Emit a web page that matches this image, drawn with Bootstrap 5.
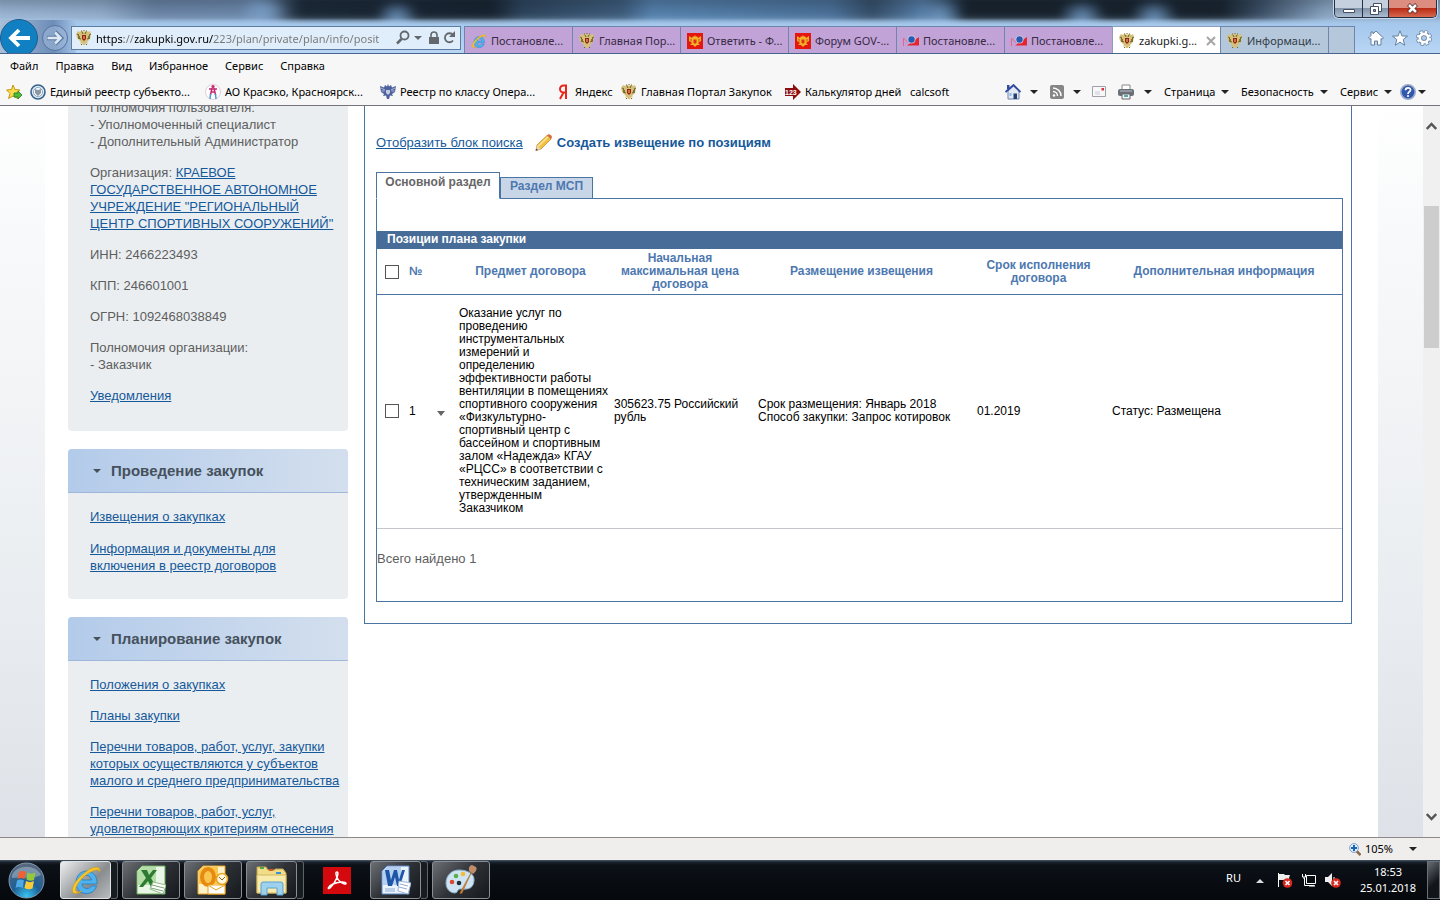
<!DOCTYPE html>
<html lang="ru">
<head>
<meta charset="utf-8">
<meta name="viewport" content="width=device-width, initial-scale=1">
<title>Позиции плана закупки</title>
<link href="https://cdn.jsdelivr.net/npm/bootstrap@5.3.0/dist/css/bootstrap.min.css" rel="stylesheet">
<style>
:root{--ui:"Noto Sans","Open Sans",sans-serif;--page:"Liberation Sans",Arial,sans-serif;--line:#4a74a4;--link:#15599b}
body{font-family:var(--ui);font-size:11px;line-height:16px;color:#000;background:#fff}
button{font:inherit;color:inherit;background:none;border:0;padding:0}
svg{display:block;flex:none}
.ic{width:16px;height:16px}
/* window frame */
.frame{position:relative;height:54px;border-bottom:1px solid #45658c;background:#b4d2f0;overflow:hidden}
.glass{position:absolute;inset:-8px -8px 31px;filter:blur(4px);background:
 radial-gradient(ellipse 22px 15px at 405px 24px,#6c94bf,#6c94bf00),
 radial-gradient(ellipse 26px 16px at 272px 20px,#7ba0ca,#7ba0ca00),
 radial-gradient(ellipse 24px 18px at 948px 24px,#6c94bf,#6c94bf00),
 radial-gradient(ellipse 24px 16px at 1090px 24px,#6c94bf,#6c94bf00),
 radial-gradient(ellipse 24px 16px at 1162px 24px,#6c94bf,#6c94bf00),
 linear-gradient(#0f1a2666,#0f1a2600 22px),
 linear-gradient(90deg,#9cb6d4 0,#92accb 110px,#6d87a8 160px,#6b88ab 265px,#1b2836 310px,#17222f 500px,#2d445c 530px,#3e5c7c 630px,#5682ae 660px,#4b7199 840px,#354e68 880px,#577fa9 930px,#17222d 975px,#17222d 1230px,#3d5168 1270px,#8ba6c4 1335px,#8ba8c8 100%)}
.glass2{position:absolute;inset:18px 0 0;background:linear-gradient(#94b8de00,#a5c8ec 7px,#b9d6f5)}
.glass3{position:absolute;left:0;top:20px;width:76px;height:34px;background:linear-gradient(90deg,#a9bfd8,#6d8db8 70%,#a5c4e8)}
.winbtns{position:absolute;top:0;right:3px;height:18px;border:1px solid #24303f;border-top:0;border-radius:0 0 5px 5px;box-shadow:0 0 0 1px #c7d8ea;overflow:hidden}
.winbtns button{width:28px;display:flex;align-items:center;justify-content:center;background:linear-gradient(#c4d0de 45%,#8294aa 50%,#aabdd2);border-right:1px solid #24303f}
.winbtns button+button{width:26px}
.winbtns button.closer{width:47px;border:0;background:linear-gradient(#dc8d80 45%,#b92c17 50%,#d8674e)}
.navrow{position:relative;padding-top:26px;height:53px}
.backbtn,.fwdbtn{width:38px;height:38px;margin-top:-7px}
.fwdbtn{width:28px;height:28px;margin:-2px 2px 0 3px}
.addr{width:390px;height:24px;background:#e0edfa;border:1px solid #5c7ca0;padding:0 4px}
.addr input{border:0;outline:0;flex:1;min-width:0;margin:0 4px 0 4px;padding:0;height:20px;color:transparent;background:linear-gradient(90deg,#000 28px,#777 28px,#777 39px,#000 39px,#000 117px,#777 117px);-webkit-background-clip:text;background-clip:text}
.tabbar{margin-left:3px;height:27px}
.btab{width:108px;height:27px;background:#c2a3d7;border:1px solid #6f86ac;border-width:1px 0 0 1px;padding:2px 0 0 6px;gap:4px;color:#372a45;text-align:left}
.btab.on{background:#fff;color:#222;border-color:#8ba0b8}
.btab.idle{background:#b5c7da;color:#333d48}
.btab.blank{width:27px;border-right-width:1px}
.wtools{margin-left:auto;padding-right:8px;gap:8px;height:24px}
/* command rows */
.rows{background:#f7f7f7;border-bottom:1px solid #77737a}
.menurow{height:24px;padding-left:10px;gap:17px}
.favrow{height:27px;padding-left:6px}
.favrow a{color:#000;text-decoration:none;gap:4px;white-space:nowrap}
.f1{width:24px}.f2{width:175px}.f3{width:177px}.f4{width:64px}.f5{width:164px}.f6{width:125px}
.tool{display:flex;align-items:center;white-space:nowrap;gap:6px}
.tool::after,.car::after{content:"";border:4px solid transparent;border-top-color:#222;border-bottom:0}
.tool.flat::after{display:none}
.t1{width:45px;gap:9px}.t2{width:42px;gap:9px}.t3{width:26px}.t4{width:46px;gap:10px}.t5{width:77px}.t6{width:99px}.t7{width:60px}.t8{width:40px;gap:2px}
/* page */
.view{flex:1;min-height:0;overflow:hidden;font-family:var(--page);font-size:13px;line-height:17px;color:#5e5e5e}
.side-bg{flex:1;min-width:0;padding:0 45px;background:linear-gradient(#fff 0,#f9fafb 15%,#eceff2 60%,#dee2e8 100%)}
.sheet{background:#fff;height:100%;padding:0 26px 0 23px;gap:16px;overflow:hidden}
.sheet a{color:var(--link)}
.leftcol{width:280px;flex:none}
.panel{background:#eaeef1;border-radius:4px;margin-bottom:18px;padding-bottom:25px;overflow:hidden}
.panel.user{margin-top:-20px;padding:13px 14px 27px 22px}
.panel p{margin:0 0 14px}
.panel p:last-child{margin-bottom:0}
.panel h2{font-size:15px;line-height:43px;height:44px;font-weight:bold;color:#46515c;margin:0;padding-left:25px;gap:10px;background:linear-gradient(90deg,#b3cbea,#d3dfee);border-bottom:1px solid #9fb7da}
.panel h2 svg{width:8px;height:4px}
.panel ul{list-style:none;margin:0;padding:15px 4px 0 22px;display:flex;flex-direction:column;gap:15px}
.panel ul.long{gap:14px}
.maincol{flex:1;min-width:0;align-self:flex-start;border:1px solid var(--line);border-top:0;padding:28px 8px 21px 11px}
.actions{gap:12px}
.maincol .create{font-weight:bold;text-decoration:none;gap:4px}
.ptabs{margin-top:21px;margin-bottom:-1px;position:relative}
.ptab{font-size:12px;line-height:17px;font-weight:bold;border:1px solid var(--line)}
.ptab.on{width:124px;height:27px;background:#fff;border-bottom-color:#fff;padding-bottom:7px;color:#666}
.ptab.off{width:93px;height:22px;background:#c9d6e7;color:#4d78b0;padding-bottom:3px}
.pbox{border:1px solid var(--line);padding:32px 0 33px}
.ptitle{background:#486c98;color:#fff;font-size:12px;line-height:16px;height:18px;font-weight:bold;margin:0;padding-left:10px}
.ptable{width:100%;table-layout:fixed;font-size:12px;line-height:13px;color:#000}
.ptable th{color:#4d78b0;text-align:center;padding:3px 4px;border-bottom:1px solid var(--line);vertical-align:middle}
.ptable td{padding:12px 4px 13px 6px;border-bottom:1px solid #c3c7cc;vertical-align:middle}
.ptable th:nth-child(-n+2),.ptable td:nth-child(-n+2){text-align:left;padding-left:6px;padding-right:0}
.ptable th:first-child,.ptable td:first-child{padding-left:8px}
.ptable td:nth-child(3){padding-right:0}
.ptable input{appearance:none;width:14px;height:14px;border:1px solid #555;background:#fff;display:block;margin:0}
.ptable input:checked{background:#486c98}
.ptable .opener{padding-top:4px}
.found{margin:21px 0 1px}
.scroller{width:17px;background:#f0f0f0;flex:none}
.scroller i{display:block;width:15px;height:142px;background:#cdcdcd;margin:60px 0 auto 1px}
.scroller button{height:40px;display:flex;align-items:center;justify-content:center}
/* status and task bars */
.status{height:23px;background:#f0eded;border-top:1px solid #8c8a88;padding-right:23px}
.taskbar{height:40px;background:linear-gradient(#4c5a6c 0,#1b232d 2px,#0c1118 5px,#05080c);color:#fff;padding-left:8px}
.startbtn{margin-right:15px}
.app{height:38px;width:58px;margin:1px 4px 1px 0;border:1px solid #8a8d91;border-radius:3px;background:linear-gradient(135deg,#6c7075,#2e3236 50%,#15191d);display:flex;align-items:center;justify-content:center}
.app.narrow{width:51px;margin-right:0}
.app.live{background:linear-gradient(135deg,#eceeef,#8a8d90 60%,#b9bcbf);border-color:#dfe1e3}
.stack{width:7px;height:38px;border:1px solid #5f6469;border-left:0;border-radius:0 3px 3px 0;background:#171c21;margin-right:4px}
.app.bare{border:0;background:none;width:54px;margin:0 6px 0 2px}
.tray{gap:8px}
.clock{width:78px;line-height:16px;text-align:center}
.tray .desk{width:13px;height:38px;border:1px solid #6b7178;background:linear-gradient(135deg,#666c73,#12161b 60%);margin-left:-8px}
</style>
</head>
<body class="vh-100 d-flex flex-column overflow-hidden">
<svg width="0" height="0" class="position-absolute" aria-hidden="true">
 <symbol id="eagle" viewBox="0 0 16 16"><path d="M2 1l2 1 1-1h2l1 1 1-1h2l1 1 2-1 1 3-1 5-2 2-1 1 1 2-2-1-1 2H7l-1-2-2 1 1-2-2-2-2-2L0 4z" fill="#d3c07a"/><path d="M1 4l2 1-1 1 2 1-2 1 3 1M15 4l-2 1 1 1-2 1 2 1-3 1M6 14l-1 1M10 14l1 1M6 2l1 2M10 2L9 4" stroke="#6e6224" fill="none"/><path d="M6 5h4v4l-2 2-2-2z" fill="#9c1f16"/><path d="M8 6v3" stroke="#eecf7a"/><path d="M5 1h1M10 1h1M8 0v1" stroke="#7d6519"/></symbol>
 <symbol id="arms" viewBox="0 0 16 16"><path fill="#e3170e" d="M0 0h16v16H0z"/><path d="M2 3l3 2 1-2 1 1 1-2 1 2 1-1 1 2 3-2v5l-3 2 2 2-3 0-2 2-2-2-3 0 2-2-3-2z" fill="#f6b02c"/><path d="M6.500 6.500h3v3L8 11 6.500 9.500z" fill="#d9380f"/><path d="M3 6l2 1M13 6l-2 1M3 8l2 0M13 8h-2" stroke="#b9540b" stroke-width=".7"/></symbol>
 <symbol id="mail3" viewBox="0 0 16 16"><path d="M.5 13V5l5 5" stroke="#e5668a" fill="none"/><path d="M4 12.500L16 4v8.500z" fill="#e5262e"/><circle cx="8.500" cy="6.500" r="4" fill="#d8c5ea"/><circle cx="8.500" cy="6.500" r="3.200" fill="#235fae"/></symbol>
 <symbol id="ie" viewBox="0 0 32 32"><path d="M27 20H12c.5 3 2.500 4.500 5 4.500 2 0 3.500-1 4.500-2.500h5c-1.500 5-5.500 7.500-10 7.500C10 29.500 6 24.500 6 18.500 6 12 10.500 7 16.500 7 23 7 27.500 12 27 20zM12 16h9.500c-.5-3-2.500-4.500-4.800-4.500S12.600 13 12 16z" fill="#4fb2ee" stroke="#1878bd" stroke-width=".7"/><path d="M30 8c1-6-6-6-13-1C9 12.500 1 22 2.500 27.500 3.500 31 9 29 12 27c-8 3.500-8-2-3-9C15 10 28 2 30 8z" fill="#f7c82b" stroke="#cf9510" stroke-width=".6"/></symbol>
</svg>

<header>
 <div class="frame">
  <div class="glass"></div><div class="glass2"></div><div class="glass3"></div>
  <div class="navrow d-flex">
   <button class="backbtn" aria-label="Назад"><svg viewBox="0 0 38 38"><circle cx="19" cy="19" r="18.500" fill="#1180c3" stroke="#1f5c8c"/><path d="M30 19H12M19 11l-8 8 8 8" fill="none" stroke="#fff" stroke-width="3.800"/></svg></button>
   <button class="fwdbtn" aria-label="Вперёд"><svg viewBox="0 0 28 28"><circle cx="14" cy="14" r="12.500" fill="#a3bcdc" fill-opacity=".5" stroke="#56759f"/><path d="M6 14h14M14 8l6 6-6 6" fill="none" stroke="#5e7ba2" stroke-width="4.500"/><path d="M6.500 14h13M14 8.500l5.500 5.500-5.500 5.500" fill="none" stroke="#dde8f5" stroke-width="2.500"/></svg></button>
   <div class="addr d-flex align-items-center"><svg class="ic"><use href="#eagle"/></svg>
    <input type="text" aria-label="Адрес" value="https://zakupki.gov.ru/223/plan/private/plan/info/posit">
    <svg width="60" height="16" viewBox="0 0 60 16" fill="none" stroke="#63686e"><circle cx="8.500" cy="5.500" r="4" stroke-width="1.800"/><path d="M5.500 9L1 13.500" stroke-width="2.500"/><path d="M18 6h8l-4 4z" fill="#63686e" stroke="none"/><path d="M35 7V5a3 3 0 016 0v2" stroke-width="1.600"/><path d="M33 7h10v7H33z" fill="#63686e" stroke="none"/><path d="M57 10.500A4.500 4.500 0 1157 5" stroke-width="1.800"/><path d="M59 1v6h-6z" fill="#63686e" stroke="none"/></svg>
   </div>
   <nav class="tabbar d-flex" aria-label="Вкладки">
    <button class="btab d-flex align-items-center"><svg class="ic"><use href="#ie"/></svg>Постановле...</button>
    <button class="btab d-flex align-items-center"><svg class="ic"><use href="#eagle"/></svg>Главная Пор...</button>
    <button class="btab d-flex align-items-center"><svg class="ic"><use href="#arms"/></svg>Ответить - Ф...</button>
    <button class="btab d-flex align-items-center"><svg class="ic"><use href="#arms"/></svg>Форум GOV-...</button>
    <button class="btab d-flex align-items-center"><svg class="ic"><use href="#mail3"/></svg>Постановле...</button>
    <button class="btab d-flex align-items-center"><svg class="ic"><use href="#mail3"/></svg>Постановле...</button>
    <button class="btab on d-flex align-items-center"><svg class="ic"><use href="#eagle"/></svg>zakupki.g...<svg class="ms-auto me-1" width="10" height="10" viewBox="0 0 10 10"><path d="M1 1l8 8M9 1L1 9" stroke="#a5a5a5" stroke-width="2"/></svg></button>
    <button class="btab idle d-flex align-items-center"><svg class="ic"><use href="#eagle"/></svg>Информаци...</button>
    <button class="btab idle blank" aria-label="Новая вкладка"></button>
   </nav>
   <div class="wtools d-flex align-items-center">
    <button aria-label="Домой"><svg class="ic" viewBox="0 0 16 16"><path d="M8 1l7.500 7-1.500 1.300-1-.8V15H9.500v-4h-3v4H3V8.500l-1 .8L.5 8l2.500-2.500V2h2v1.800z" fill="#fff" stroke="#64809f"/></svg></button>
    <button aria-label="Избранное"><svg class="ic" viewBox="0 0 16 16"><path d="M8 .8l2 5.200 5.500.1-4.300 3.500 1.500 5.600L8 12.200l-4.700 3 1.500-5.600L.5 6.100 6 6z" fill="#fff" stroke="#64809f"/></svg></button>
    <button aria-label="Сервис"><svg class="ic" viewBox="0 0 16 16"><circle cx="8" cy="8" r="6.300" fill="none" stroke="#64809f" stroke-width="3.400" stroke-dasharray="3 1.950"/><circle cx="8" cy="8" r="4.300" fill="none" stroke="#64809f" stroke-width="4.500"/><circle cx="8" cy="8" r="6" fill="none" stroke="#fff" stroke-width="2.600" stroke-dasharray="2.200 2.510" stroke-dashoffset="-.3"/><circle cx="8" cy="8" r="4.200" fill="none" stroke="#fff" stroke-width="2.700"/></svg></button>
   </div>
  </div>
  <div class="winbtns d-flex">
   <button aria-label="Свернуть"><svg width="12" height="10" viewBox="0 0 12 10"><path d="M.5 5.500h11v3H.5z" fill="#fff" stroke="#44505f"/></svg></button>
   <button aria-label="Восстановить"><svg width="12" height="12" viewBox="0 0 12 12" fill="#fff" stroke="#44505f"><path d="M3.500.5h8v8h-8z"/><path d="M.5 3.500h8v8h-8z"/><path d="M3.500 6.500h2v2h-2z" fill="#8294aa"/></svg></button>
   <button class="closer" aria-label="Закрыть"><svg width="13" height="11" viewBox="0 0 13 11"><path d="M2.500 1.500l8 8M10.500 1.500l-8 8" stroke="#57302c" stroke-width="4"/><path d="M3 2l7 7M10 2L3 9" stroke="#fff" stroke-width="2.500"/></svg></button>
  </div>
 </div>
 <div class="rows">
  <nav class="menurow d-flex align-items-center" aria-label="Меню"><button>Файл</button><button>Правка</button><button>Вид</button><button>Избранное</button><button>Сервис</button><button>Справка</button></nav>
  <div class="favrow d-flex align-items-center">
   <button class="f1" aria-label="Добавить в избранное"><svg class="ic" viewBox="0 0 16 16"><path d="M7 1l2 4.500 5 .5-4 3.500 1.500 5L7 12l-4.500 2.500L4 9.500.5 6 5.500 5.500z" fill="#fbdc4b" stroke="#c79615"/><path d="M8 9h4V7l4 4-4 4v-2H8z" fill="#51bb3c" stroke="#217e1d" stroke-width=".8"/></svg></button>
   <a class="f2 d-flex align-items-center" href="#"><svg class="ic" viewBox="0 0 16 16"><circle cx="8" cy="8" r="7" fill="#dfe9f1" stroke="#35638c" stroke-width="1.600"/><circle cx="8" cy="8" r="4.500" fill="#fff" stroke="#8ba7bf"/><path d="M5 5l3 1 3-1v4l-3 3-3-3z" fill="#8a98a6"/></svg>Единый реестр субъекто...</a>
   <a class="f2 d-flex align-items-center" href="#"><svg class="ic" viewBox="0 0 16 16"><circle cx="8" cy="8" r="7.500" fill="#fff" stroke="#d6b8cf" stroke-width=".7"/><circle cx="8" cy="2.500" r="1.600" fill="#c4296e"/><path d="M4 5h8M7 4L5.500 11M9 4l1.500 7M6 8h4" stroke="#c4296e" stroke-width="1.500"/><path d="M5.500 10L5 15M10.500 10l.5 5" stroke="#4a9bd2" stroke-width="1.500"/></svg>АО Красэко, Красноярск...</a>
   <a class="f3 d-flex align-items-center" href="#"><svg class="ic" viewBox="0 0 16 16"><path d="M0 2l4 1.500L5 1l2 1.500L8 0l1 2.500L11 1l1 2.500L16 2l-1 6-3 2 1 2-3-.5L9 15H7l-1-3.500-3 .5 1-2-3-2z" fill="#4e619d"/><path d="M1 4l4 2M1.500 7l3 0M15 4l-4 2M14.500 7h-3" stroke="#c8cfe4" stroke-width=".8"/><path d="M6 6h4v3l-2 2-2-2z" fill="#c4cce4"/></svg>Реестр по классу Опера...</a>
   <a class="f4 d-flex align-items-center" href="#"><svg width="14" height="16" viewBox="0 0 14 16"><path d="M9 15V1.500H6.500a3.500 3.500 0 000 7H9M6.500 8.500L3 15" stroke="#e9261b" stroke-width="2" fill="none"/></svg>Яндекс</a>
   <a class="f5 d-flex align-items-center" href="#"><svg class="ic"><use href="#eagle"/></svg>Главная Портал Закупок</a>
   <a class="f6 d-flex align-items-center" href="#"><svg class="ic" viewBox="0 0 16 16"><path d="M0 4h8V0l8 8-8 8v-4H0z" fill="#8e0e10"/><text x="0" y="11" font-size="7" font-weight="bold" fill="#fff" font-family="Liberation Sans,sans-serif">123</text></svg>Калькулятор дней</a>
   <a href="#">calcsoft</a>
   <div class="d-flex align-items-center ms-auto">
    <button class="tool t1" aria-label="Домашняя страница"><svg class="ic" viewBox="0 0 16 16"><path d="M3 7v8h11V7L8.500 2z" fill="#e4eaf4" stroke="#7084ab"/><path d="M.5 8L8.500 1l7 7" fill="none" stroke="#30499e" stroke-width="1.800"/><path d="M2 1h2.500v4H2z" fill="#30499e"/><path d="M8.500 9.500H12V15H8.500z" fill="#273d73"/><path d="M4.500 9h2v3h-2z" fill="#86bce9"/></svg></button>
    <button class="tool t2" aria-label="Каналы"><svg width="14" height="14" viewBox="0 0 14 14"><rect width="14" height="14" rx="2" fill="#868686"/><circle cx="4" cy="10.500" r="1.300" fill="#fff"/><path d="M3 6.500a4.500 4.500 0 014.500 4.500M3 3a8 8 0 018 8" fill="none" stroke="#fff" stroke-width="1.500"/></svg></button>
    <button class="tool flat t3" aria-label="Почта"><svg width="14" height="11" viewBox="0 0 14 11"><path d="M.5.5h13v10H.5z" fill="#f8f8fb" stroke="#a0a0a8"/><path d="M9.500 2H12v2.500H9.500z" fill="#d9333d"/><path d="M3 6h5M3 8h5" stroke="#c9c9d3"/></svg></button>
    <button class="tool t4" aria-label="Печать"><svg class="ic" viewBox="0 0 16 16"><path d="M4 1h8v5H4z" fill="#fff" stroke="#888"/><rect y="5" width="16" height="7" rx="2" fill="#69707a"/><path d="M2 7h12" stroke="#b8bec5"/><path d="M4 10h8v5H4z" fill="#f8f8f8" stroke="#666"/><path d="M6 12h4" stroke="#56a5b7" stroke-width="2"/></svg></button>
    <button class="tool t5">Страница</button><button class="tool t6">Безопасность</button><button class="tool t7">Сервис</button>
    <button class="tool t8" aria-label="Справка"><svg class="ic" viewBox="0 0 16 16"><circle cx="8" cy="8" r="7.200" fill="#3157b1" stroke="#9eadc8" stroke-width="1.600"/><path d="M5.500 6.300C5.500 3 10.700 3.200 10.500 6 10.400 7.700 8 7.600 8 10" stroke="#fff" stroke-width="1.800" fill="none"/><circle cx="8" cy="12" r="1.100" fill="#fff"/></svg></button>
   </div>
  </div>
 </div>
</header>

<div class="view d-flex">
 <div class="side-bg"><div class="sheet d-flex">
  <aside class="leftcol">
   <section class="panel user">
    <p>Полномочия пользователя:<br>- Уполномоченный специалист<br>- Дополнительный Администратор</p>
    <p>Организация: <a href="#">КРАЕВОЕ ГОСУДАРСТВЕННОЕ АВТОНОМНОЕ УЧРЕЖДЕНИЕ "РЕГИОНАЛЬНЫЙ ЦЕНТР СПОРТИВНЫХ СООРУЖЕНИЙ"</a></p>
    <p>ИНН: 2466223493</p><p>КПП: 246601001</p><p>ОГРН: 1092468038849</p>
    <p>Полномочия организации:<br>- Заказчик</p>
    <p><a href="#">Уведомления</a></p>
   </section>
   <section class="panel">
    <h2 class="d-flex align-items-center"><svg viewBox="0 0 8 4"><path d="M0 0h8L4 4z" fill="#46515c"/></svg>Проведение закупок</h2>
    <ul><li><a href="#">Извещения о закупках</a></li><li><a href="#">Информация и документы для включения в реестр договоров</a></li></ul>
   </section>
   <section class="panel">
    <h2 class="d-flex align-items-center"><svg viewBox="0 0 8 4"><path d="M0 0h8L4 4z" fill="#46515c"/></svg>Планирование закупок</h2>
    <ul class="long"><li><a href="#">Положения о закупках</a></li><li><a href="#">Планы закупки</a></li><li><a href="#">Перечни товаров, работ, услуг, закупки которых осуществляются у субъектов малого и среднего предпринимательства</a></li><li><a href="#">Перечни товаров, работ, услуг, удовлетворяющих критериям отнесения</a></li></ul>
   </section>
  </aside>
  <main class="maincol">
   <div class="actions d-flex align-items-center"><a href="#">Отобразить блок поиска</a>
    <a href="#" class="create d-flex align-items-center"><svg width="18" height="17" viewBox="0 0 18 17"><path d="M2 11L12 1.500l4 3.500L6 15l-5 1.500z" fill="#f2c144" stroke="#c48d26" stroke-width=".8"/><path d="M3 12.500l10.500-10" stroke="#fbe59a" stroke-width="1.500"/><path d="M12 1.500C13 0 14 0 15.500 1s2 2.500.5 4z" fill="#d9673a"/><path d="M2 11l4 4-5 1.500z" fill="#ecd2ae"/><path d="M1.500 14.500l1.500 1.500-2.500.7z" fill="#444"/></svg>Создать извещение по позициям</a></div>
   <div class="ptabs d-flex align-items-end"><button class="ptab on">Основной раздел</button><button class="ptab off">Раздел МСП</button></div>
   <div class="pbox">
    <h1 class="ptitle">Позиции плана закупки</h1>
    <table class="ptable">
     <colgroup><col style="width:26px"><col style="width:50px"><col style="width:155px"><col style="width:144px"><col style="width:219px"><col style="width:135px"><col></colgroup>
     <thead><tr><th><input type="checkbox" aria-label="Выбрать все"></th><th>№</th><th>Предмет договора</th><th>Начальная максимальная цена договора</th><th>Размещение извещения</th><th>Срок исполнения договора</th><th>Дополнительная информация</th></tr></thead>
     <tbody><tr><td><input type="checkbox" aria-label="Выбрать позицию 1"></td>
      <td><div class="d-flex align-items-center justify-content-between pe-2"><span>1</span><button class="opener" aria-label="Действия"><svg width="8" height="5" viewBox="0 0 8 5"><path d="M0 0h8L4 5z" fill="#666"/></svg></button></div></td>
      <td>Оказание услуг по проведению инструментальных измерений и определению эффективности работы вентиляции в помещениях спортивного сооружения «Физкультурно-спортивный центр с бассейном и спортивным залом «Надежда» КГАУ «РЦСС» в соответствии с техническим заданием, утвержденным Заказчиком</td>
      <td>305623.75 Российский рубль</td><td>Срок размещения: Январь 2018<br>Способ закупки: Запрос котировок</td><td>01.2019</td><td>Статус: Размещена</td></tr></tbody>
    </table>
    <p class="found">Всего найдено 1</p>
   </div>
  </main>
 </div></div>
 <div class="scroller d-flex flex-column"><button aria-label="Вверх"><svg width="11" height="8" viewBox="0 0 11 8"><path d="M.8 7l4.700-5 4.700 5" fill="none" stroke="#555" stroke-width="2.400"/></svg></button><i></i><button aria-label="Вниз"><svg width="11" height="8" viewBox="0 0 11 8"><path d="M.8 1l4.700 5 4.700-5" fill="none" stroke="#555" stroke-width="2.400"/></svg></button></div>
</div>

<div class="status d-flex align-items-center justify-content-end"><button class="car d-flex align-items-center gap-3"><span class="d-flex align-items-center gap-1"><svg width="12" height="13" viewBox="0 0 12 13"><path d="M7.500 8l4 4" stroke="#8a6848" stroke-width="2.500"/><circle cx="5" cy="5" r="4.400" fill="#e1effc" stroke="#7ba2ca"/><path d="M5 2v6M2 5h6" stroke="#1d62b3" stroke-width="2"/></svg>105%</span></button></div>

<footer class="taskbar d-flex align-items-center">
 <button class="startbtn" aria-label="Пуск"><svg width="37" height="37" viewBox="0 0 37 37"><defs><radialGradient id="orb" cx=".5" cy=".95" r=".9"><stop offset="0" stop-color="#39c5f3"/><stop offset=".45" stop-color="#1c5f96"/><stop offset="1" stop-color="#56687f"/></radialGradient></defs><circle cx="18.500" cy="18.500" r="17.500" fill="url(#orb)" stroke="#8299af"/><path d="M4 13C9 2 28 2 33 13c-9 5-20 1-29 3z" fill="#fff" opacity=".3"/><path d="M11 10c3-1.500 5-1 7 0l-1.500 7c-2-1-4.500-1.500-7 0z" fill="#ef6132"/><path d="M19.500 10.500c3 1.500 5 1.500 8 0L26 18c-2.500 1.300-5 1-7.500-.5z" fill="#95c93c"/><path d="M9 18.500c3-1.500 5-1 7 0L14.500 26c-2-1-4.500-1.500-7 0z" fill="#4fa9e5"/><path d="M18 19c3 1.500 5 1.500 8 0l-1.500 7.500c-2.500 1.300-5.500 1-8-.5z" fill="#fbca38"/></svg></button>
 <button class="app narrow live" aria-label="Internet Explorer"><svg width="32" height="32"><use href="#ie"/></svg></button><span class="stack"></span>
 <button class="app" aria-label="Excel"><svg width="30" height="30" viewBox="0 0 30 30"><path d="M6 1h23v28H1V6z" fill="#eaf6e5" stroke="#66ab58"/><path d="M6 2h14v18H2V6z" fill="#b4dda7"/><path d="M5 5h6l2 5 4-5h4l-6 8 5 9h-5l-3-6-5 6H3l7-9z" fill="#2c7b31"/><path d="M17 17l13 3-3 9-13-5z" fill="#fff" stroke="#91b989"/><path d="M16 20l12 3M15 23l12 3" stroke="#77a96f"/></svg></button>
 <button class="app" aria-label="Outlook"><svg width="32" height="30" viewBox="0 0 32 30"><path d="M6 1h22v28H1V6z" fill="#fff2cb" stroke="#eba41c"/><path d="M6 2h15v17H2V6z" fill="#fbc650"/><ellipse cx="11" cy="12" rx="6" ry="8" fill="none" stroke="#e78a10" stroke-width="4"/><path d="M11 20h17v9H11z" fill="#fff" stroke="#eba41c"/><path d="M11 20l8 5 9-5" fill="none" stroke="#eba41c"/><circle cx="25" cy="14" r="5.500" fill="#fff7df" stroke="#eba41c" stroke-width="1.500"/><path d="M22 12l3 3 3-3" fill="none" stroke="#8a6422"/></svg></button>
 <button class="app narrow" aria-label="Проводник"><svg width="34" height="32" viewBox="0 0 34 32"><path d="M2 7V3h9l2 3h7V5h8l3 4v20H2z" fill="#f1dc87" stroke="#c1a450"/><path d="M5 4h4" stroke-width="2" stroke="#51a74a"/><path d="M14 6h4" stroke="#d9562b" stroke-width="2"/><path d="M21 9h5" stroke="#3e8fd0" stroke-width="2"/><path d="M2 11h29v18H2z" fill="#f9ebac" stroke="#d2b963"/><path d="M6 31V20q0-2 2-2h18q2 0 2 2v11h-6v-7H12v7z" fill="#9ed1ee" stroke="#5ba2cf"/></svg></button><span class="stack"></span>
 <button class="app bare" aria-label="Adobe Reader"><svg width="28" height="27" viewBox="0 0 28 27"><path fill="#d4090d" d="M0 0h28v27H0z"/><path d="M14 5c2.500 0-.5 10-7 16-3 2-2-2 3-4 5-2 12-3 13-1 .500 3-9-1-10-9-.3-2 .5-2 1-2z" fill="none" stroke="#fff" stroke-width="1.500"/></svg></button>
 <button class="app narrow" aria-label="Word"><svg width="30" height="30" viewBox="0 0 30 30"><path d="M6 1h22v28H1V6z" fill="#eaf2fc" stroke="#5a87c5"/><path d="M6 2h14v18H2V6z" fill="#b5d0f1"/><path d="M4 5h4l2 10 3-10h3l2 10 3-10h3l-5 16h-3l-2-9-3 9H7z" fill="#1e55a6"/><path d="M18 16l12 2-3 11-10-3z" fill="#fff" stroke="#9eb5d4"/><path d="M19 19l8 2M18 22l8 2M4 24h10M4 26h10" stroke="#8fadd5"/></svg></button><span class="stack"></span>
 <button class="app" aria-label="Paint"><svg width="32" height="32" viewBox="0 0 32 32"><path d="M14 6C6 6 1 12 1 19c0 6 4 10 9 10 3 0 2-4 5-4 4 0 13 2 14-8C30 10 23 6 14 6z" fill="#cfe4f2" stroke="#88acc4"/><circle cx="7" cy="18" r="2.300" fill="#dc4734"/><circle cx="11" cy="12" r="2.300" fill="#58b04a"/><circle cx="18" cy="10" r="2.300" fill="#f2bd34"/><circle cx="14" cy="19" r="2.300" fill="#22303a"/><path d="M27 7L17 29q-3 2-1-2z" fill="#d68a37" stroke="#a5662a" stroke-width=".6"/><path d="M24 7q-1-5 3-6l4 2q2 3-3 7z" fill="#c08d68"/></svg></button>
 <div class="tray d-flex align-items-center ms-auto">
  <button class="mb-1">RU</button>
  <svg width="20" height="16" viewBox="0 0 20 16"><path d="M7 11h8l-4-4z" fill="#ddd"/></svg>
  <svg class="ic" viewBox="0 0 16 16"><path d="M1.500 1v14" stroke="#fff"/><path d="M2 2h5l1 1h5l-1 3 1 3H8L7 8H2z" fill="#eee"/><circle cx="10.500" cy="11" r="4.800" fill="#d8281e"/><path d="M8.500 9l4 4M12.500 9l-4 4" stroke="#fff" stroke-width="1.600"/></svg>
  <svg class="ic" viewBox="0 0 16 16" fill="none" stroke="#fff"><path d="M5.500 3.500h9v8h-9zM3.500 6v7.500h10M8 14h6M1.500 2v3h3V2M3 5v2" /></svg>
  <svg class="ic" viewBox="0 0 16 16"><path d="M0 5h3l4-4v13l-4-4H0z" fill="#eee"/><path d="M9 5v5" stroke="#fff"/><circle cx="11" cy="11" r="4.800" fill="#d8281e"/><path d="M9 9l4 4M13 9l-4 4" stroke="#fff" stroke-width="1.600"/></svg>
  <div class="clock">18:53<br>25.01.2018</div>
  <button class="desk" aria-label="Свернуть все окна"></button>
 </div>
</footer>
<script src="https://cdn.jsdelivr.net/npm/bootstrap@5.3.0/dist/js/bootstrap.bundle.min.js"></script>
</body>
</html>
